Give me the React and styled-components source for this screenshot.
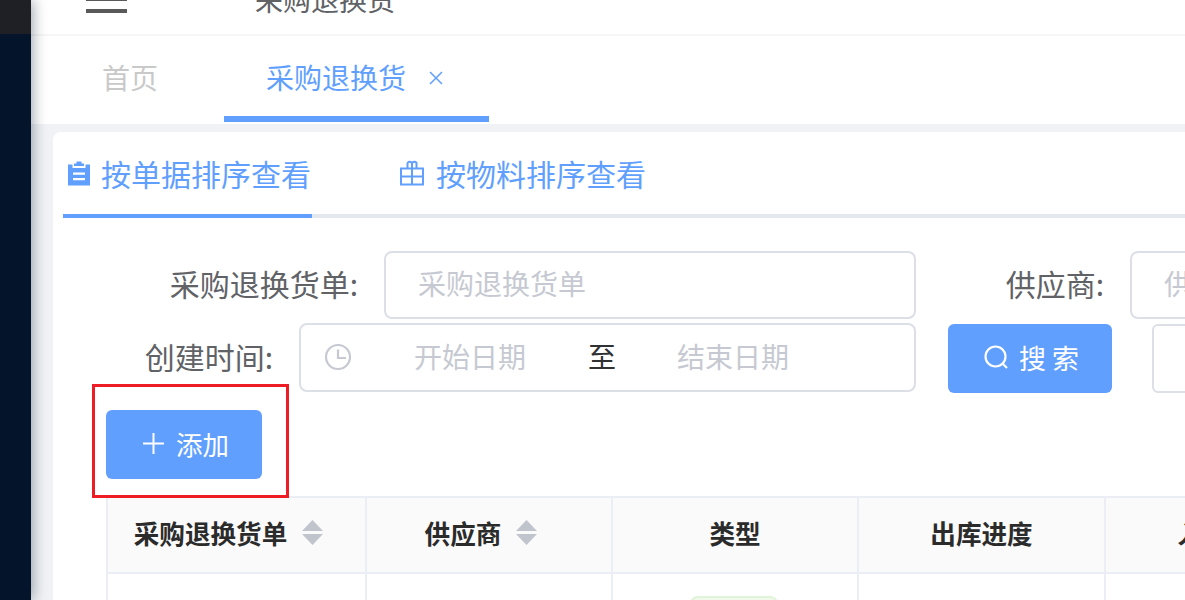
import React from 'react'
import styled, { createGlobalStyle } from 'styled-components'

const GlobalStyle = createGlobalStyle`
  html, body {
    margin: 0;
    height: 600px;
    overflow: hidden;
    background: #fff;
    font-family: "Noto Sans CJK SC", "Liberation Sans", sans-serif;
  }
  * { box-sizing: border-box; }
`

const blue = '#619fff'

const Page = styled.div`
  display: flex;
  width: 1185px;
  height: 600px;
  overflow: hidden;
`

const Sidebar = styled.aside`
  position: relative;
  z-index: 2;
  flex: 0 0 31px;
  background: #04142b;
  box-shadow: 2px 0 14px rgba(0, 21, 41, 0.38);
`

const SidebarLogo = styled.div`
  height: 34px;
  background: #1f2026;
`

const Main = styled.main`
  flex: 1;
  min-width: 0;
  display: flex;
  flex-direction: column;
  background: #f0f2f5;
`

const Header = styled.header`
  flex: 0 0 36px;
  display: flex;
  align-items: flex-end;
  overflow: hidden;
  background: #fff;
  border-bottom: 2px solid #f6f6f6;
  padding: 0 0 20px 55px;
`

const Hamburger = styled.div`
  width: 41px;
  height: 4px;
  margin-bottom: 1px;
  background: #595959;
  box-shadow: 0 -12px 0 #595959;
`

const HeaderTitle = styled.span`
  margin-left: 128px;
  font-size: 28px;
  line-height: 40px;
  margin-bottom: -5px;
  color: #606266;
`

const PageTabs = styled.nav`
  flex: 0 0 88px;
  display: flex;
  background: #fff;
  padding: 0 0 2px 29px;
`

const PageTab = styled.div`
  display: flex;
  align-items: center;
  height: 86px;
  padding: 2px 45px 0 42px;
  margin-right: 21px;
  font-size: 28px;
  color: ${p => (p.$active ? blue : '#c9c9c9')};
  border-bottom: 6px solid ${p => (p.$active ? blue : 'transparent')};
  svg { margin-left: 22px; margin-top: 2px; }
`

const Content = styled.div`
  flex: 1;
  min-height: 0;
  padding: 8px 0 0 22px;
`

const Card = styled.section`
  width: 1300px;
  height: 600px;
  background: #fff;
  border-radius: 8px;
  padding: 0 0 0 10px;
  overflow: hidden;
`

const CardTabs = styled.div`
  display: flex;
  height: 86px;
  border-bottom: 4px solid #e4e7ed;
`

const CardTab = styled.div`
  display: flex;
  align-items: center;
  gap: 11px;
  height: 86px;
  padding: 0 1px 0 5px;
  margin-right: 82px;
  font-size: 30px;
  color: ${blue};
  border-bottom: 4px solid ${p => (p.$active ? blue : 'transparent')};
`

const FormRow = styled.div`
  display: flex;
  align-items: center;
  margin-top: ${p => p.$top}px;
`

const FieldLabel = styled.label`
  flex: 0 0 ${p => p.$width}px;
  margin-right: 26px;
  padding-bottom: 4px;
  font-size: 30px;
  text-align: right;
  color: #606266;
  white-space: nowrap;
`

const TextInput = styled.div`
  flex: 0 0 532px;
  height: 68px;
  display: flex;
  align-items: center;
  padding: 0 0 4px 32px;
  font-size: 28px;
  color: #c6c9d1;
  border: 2px solid #dcdfe6;
  border-radius: 8px;
  white-space: nowrap;
  overflow: hidden;
`

const DatePicker = styled.div`
  flex: 0 0 617px;
  align-self: flex-start;
  height: 69px;
  display: flex;
  align-items: center;
  padding: 0 0 2px 23px;
  font-size: 28px;
  color: #c6c9d1;
  border: 2px solid #dcdfe6;
  border-radius: 8px;
`

const DateValue = styled.span`
  margin-left: ${p => p.$left}px;
  padding-bottom: 2px;
`

const DateSeparator = styled.span`
  margin-left: 62px;
  padding-bottom: 2px;
  color: #303133;
`

const Button = styled.button`
  flex: 0 0 ${p => p.$width}px;
  height: 69px;
  display: flex;
  align-items: center;
  justify-content: center;
  gap: ${p => p.$gap || 10}px;
  margin-left: ${p => p.$left || 0}px;
  margin-top: ${p => p.$lower || 0}px;
  padding: 0 0 3px ${p => p.$inset || 0}px;
  font-family: inherit;
  font-size: ${p => p.$size || 26.5}px;
  letter-spacing: ${p => p.$spacing || 0}px;
  color: ${p => (p.$plain ? '#606266' : '#fff')};
  background: ${p => (p.$plain ? '#fff' : blue)};
  border: ${p => (p.$plain ? '2px solid #dcdfe6' : 'none')};
  border-radius: 6px;
`

const ToolRow = styled.div`
  display: flex;
  width: 156px;
  margin: 17px 0 17px 43px;
`

const Highlight = styled.div`
  position: absolute;
  left: 92px;
  top: 384px;
  width: 197px;
  height: 114px;
  border: 3px solid #ee1c25;
  z-index: 3;
`

const Table = styled.div`
  display: grid;
  grid-template-columns: 259px 246px 246px 247px 247px;
  width: max-content;
  margin-left: 43px;
  border-top: 2px solid #ebeef5;
  border-left: 2px solid #ebeef5;
`

const HeadCell = styled.div`
  height: 76px;
  display: flex;
  align-items: center;
  justify-content: center;
  gap: 15px;
  padding-bottom: 6px;
  background: #fafafa;
  font-size: 25.6px;
  font-weight: 700;
  color: #2b2b2b;
  border-right: 2px solid #ebeef5;
  border-bottom: 2px solid #ebeef5;
  white-space: nowrap;
  svg { margin-right: 16px; }
`

const BodyCell = styled.div`
  height: 80px;
  display: flex;
  justify-content: center;
  padding: 22px 2px 0 0;
  border-right: 2px solid #ebeef5;
  border-bottom: 2px solid #ebeef5;
`

const Tag = styled.span`
  width: 88px;
  height: 44px;
  display: flex;
  align-items: center;
  justify-content: center;
  font-size: 24px;
  color: #67c23a;
  background: #f0f9eb;
  border: 2px solid #e1f3d8;
  border-radius: 8px;
`

const ClipboardIcon = () => (
  <svg width="22" height="25" viewBox="0 0 22 25">
    <path
      fill={blue}
      fillRule="evenodd"
      d="M6 2.5h2.5V0.5h5v2H16V5H6z M0 3.5h4.5V7h13V3.5H22V24.5H0z M5 11.5v2.2h12v-2.2z M5 17v2.2h12V17z"
    />
  </svg>
)

const GiftIcon = () => (
  <svg width="26" height="26" viewBox="0 0 26 26" fill="none" stroke={blue} strokeWidth="2">
    <path d="M2 8.5h22v16H2z M2 16.5h22 M8.5 8.5V4.5a2.3 2.3 0 0 1 4.5 -1a2.3 2.3 0 0 1 4.5 1v4 M13 3.5v21" />
  </svg>
)

const ClockIcon = () => (
  <svg width="28" height="28" viewBox="0 0 28 28" fill="none" stroke="#c6c9d1" strokeWidth="2.2">
    <circle cx="14" cy="14" r="12" />
    <path d="M14 6.5V15h8" />
  </svg>
)

const SearchIcon = () => (
  <svg width="25" height="25" viewBox="0 0 25 25" fill="none" stroke="#fff" strokeWidth="2.2">
    <circle cx="11.5" cy="11.5" r="10" />
    <path d="M19 19l4 4" />
  </svg>
)

const PlusIcon = () => (
  <svg width="21" height="21" viewBox="0 0 21 21" fill="none" stroke="#fff" strokeWidth="2">
    <path d="M10.5 0v21M0 10.5h21" />
  </svg>
)

const CloseIcon = () => (
  <svg width="16" height="16" viewBox="0 0 16 16" fill="none" stroke={blue} strokeWidth="1.5">
    <path d="M2 2l12 12M14 2L2 14" />
  </svg>
)

const SortIcon = () => (
  <svg width="21" height="25" viewBox="0 0 21 25" fill="#c0c4cc">
    <path d="M10.5 0L21 11H0z M0 14h21L10.5 25z" />
  </svg>
)

const columns = [
  { title: '采购退换货单', sortable: true },
  { title: '供应商', sortable: true },
  { title: '类型' },
  { title: '出库进度' },
  { title: '入库进度' },
]

const App = () => {
  return (
    <Page>
      <GlobalStyle />
      <Sidebar>
        <SidebarLogo />
      </Sidebar>
      <Main>
        <Header>
          <Hamburger />
          <HeaderTitle>采购退换货</HeaderTitle>
        </Header>
        <PageTabs>
          <PageTab>首页</PageTab>
          <PageTab $active>
            采购退换货
            <CloseIcon />
          </PageTab>
        </PageTabs>
        <Content>
          <Card>
            <CardTabs>
              <CardTab $active>
                <ClipboardIcon />
                按单据排序查看
              </CardTab>
              <CardTab>
                <GiftIcon />
                按物料排序查看
              </CardTab>
            </CardTabs>
            <FormRow $top={33}>
              <FieldLabel $width={295}>采购退换货单:</FieldLabel>
              <TextInput>采购退换货单</TextInput>
              <FieldLabel $width={188}>供应商:</FieldLabel>
              <TextInput>供应商</TextInput>
            </FormRow>
            <FormRow $top={4}>
              <FieldLabel $width={210}>创建时间:</FieldLabel>
              <DatePicker>
                <ClockIcon />
                <DateValue $left={62}>开始日期</DateValue>
                <DateSeparator>至</DateSeparator>
                <DateValue $left={61}>结束日期</DateValue>
              </DatePicker>
              <Button $width={164} $left={32} $lower={1} $size={27} $spacing={6} $inset={9}>
                <SearchIcon />
                搜索
              </Button>
              <Button $width={164} $left={40} $lower={1} $size={27} $spacing={6} $plain>
                重置
              </Button>
            </FormRow>
            <ToolRow>
              <Button $width={156} $gap={12} $inset={4}>
                <PlusIcon />
                添加
              </Button>
            </ToolRow>
            <Table>
              {columns.map(col => (
                <HeadCell key={col.title}>
                  {col.title}
                  {col.sortable && <SortIcon />}
                </HeadCell>
              ))}
              <BodyCell />
              <BodyCell />
              <BodyCell>
                <Tag>退货</Tag>
              </BodyCell>
              <BodyCell />
              <BodyCell />
            </Table>
          </Card>
        </Content>
      </Main>
      <Highlight />
    </Page>
  )
}

export default App
